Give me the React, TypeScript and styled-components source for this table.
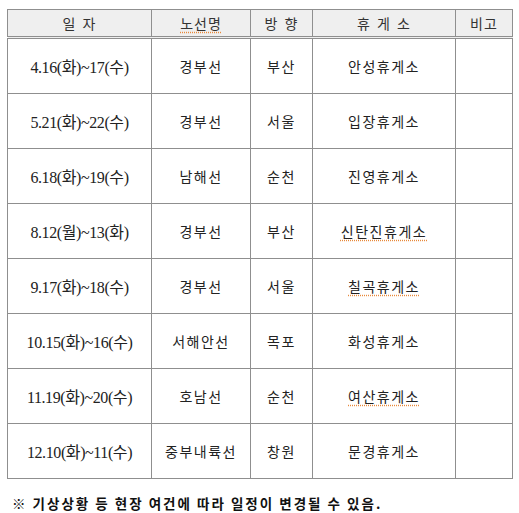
import React from "react";
import styled, { createGlobalStyle } from "styled-components";

const GlobalStyle = createGlobalStyle`
  html, body {
    margin: 0;
    padding: 0;
    background: #ffffff;
  }
`;

const Page = styled.div`
  padding: 9px 0 0 7px;
  width: 519px;
  box-sizing: border-box;
`;

const Table = styled.table`
  width: 505px;
  border-collapse: collapse;
  table-layout: fixed;
  border: 1px solid #8f8f8f;
`;

const HeadCell = styled.th`
  height: 26px;
  padding: 0;
  background: #efefef;
  border-left: 1px solid #8f8f8f;
  border-right: 1px solid #8f8f8f;
  border-bottom: 3px double #8f8f8f;
  color: #333;
  font-family: "Noto Sans CJK KR", sans-serif;
  font-size: 14px;
  font-weight: 400;
  letter-spacing: 1px;
  word-spacing: 2px;
  text-align: center;
`;

const Cell = styled.td<{ $serif?: boolean }>`
  height: 54px;
  padding: 0;
  border: 1px solid #8f8f8f;
  color: #222;
  text-align: center;
  vertical-align: middle;
  font-family: ${(p) =>
    p.$serif
      ? '"Liberation Serif", "Noto Sans CJK KR", serif'
      : '"Noto Sans CJK KR", sans-serif'};
  font-size: ${(p) => (p.$serif ? "16px" : "14px")};
  letter-spacing: ${(p) => (p.$serif ? "-0.4px" : "1.5px")};
`;

const Flagged = styled.span`
  text-decoration: underline dotted #e8893a;
  text-underline-offset: 3px;
`;

const Note = styled.p`
  margin: 14px 0 0 5px;
  font-family: "Noto Sans CJK KR", sans-serif;
  font-size: 13.5px;
  font-weight: 700;
  letter-spacing: 2px;
  color: #111;
`;

type Row = {
  date: string;
  line: string;
  dir: string;
  stop: string;
  flagged?: boolean;
};

const rows: Row[] = [
  { date: "4.16(화)~17(수)", line: "경부선", dir: "부산", stop: "안성휴게소" },
  { date: "5.21(화)~22(수)", line: "경부선", dir: "서울", stop: "입장휴게소" },
  { date: "6.18(화)~19(수)", line: "남해선", dir: "순천", stop: "진영휴게소" },
  { date: "8.12(월)~13(화)", line: "경부선", dir: "부산", stop: "신탄진휴게소", flagged: true },
  { date: "9.17(화)~18(수)", line: "경부선", dir: "서울", stop: "칠곡휴게소", flagged: true },
  { date: "10.15(화)~16(수)", line: "서해안선", dir: "목포", stop: "화성휴게소" },
  { date: "11.19(화)~20(수)", line: "호남선", dir: "순천", stop: "여산휴게소", flagged: true },
  { date: "12.10(화)~11(수)", line: "중부내륙선", dir: "창원", stop: "문경휴게소" },
];

export default function App() {
  return (
    <>
      <GlobalStyle />
      <Page>
        <Table>
          <colgroup>
            <col style={{ width: 144 }} />
            <col style={{ width: 99 }} />
            <col style={{ width: 62 }} />
            <col style={{ width: 143 }} />
            <col style={{ width: 57 }} />
          </colgroup>
          <thead>
            <tr>
              <HeadCell>일 자</HeadCell>
              <HeadCell>
                <Flagged>노선명</Flagged>
              </HeadCell>
              <HeadCell>방 향</HeadCell>
              <HeadCell>휴 게 소</HeadCell>
              <HeadCell>비고</HeadCell>
            </tr>
          </thead>
          <tbody>
            {rows.map((r) => (
              <tr key={r.date}>
                <Cell $serif>{r.date}</Cell>
                <Cell>{r.line}</Cell>
                <Cell>{r.dir}</Cell>
                <Cell>{r.flagged ? <Flagged>{r.stop}</Flagged> : r.stop}</Cell>
                <Cell />
              </tr>
            ))}
          </tbody>
        </Table>
        <Note>※ 기상상황 등 현장 여건에 따라 일정이 변경될 수 있음.</Note>
      </Page>
    </>
  );
}
